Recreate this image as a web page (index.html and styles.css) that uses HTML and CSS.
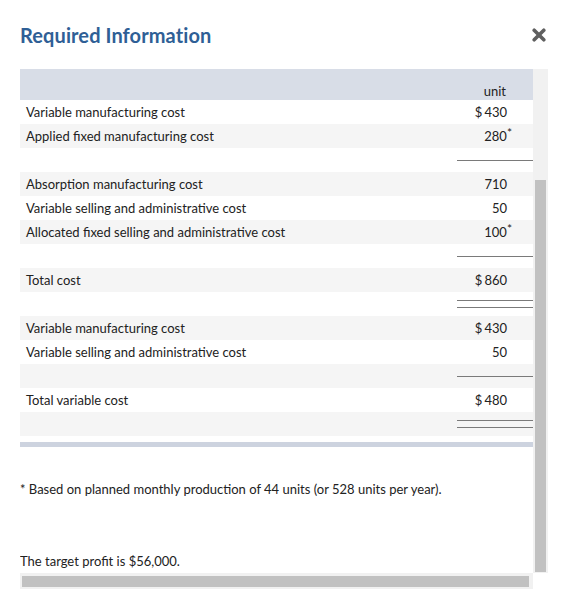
FILE: index.html
```html
<!DOCTYPE html>
<html lang="en">
<head>
<meta charset="utf-8">
<title>Required Information</title>
<link rel="stylesheet" href="styles.css">
</head>
<body>
<div class="modal">
  <div class="modal-head">
    <h1 class="title">Required Information</h1>
    <button class="close" type="button" aria-label="Close">
      <svg viewBox="0 0 14 14" width="14" height="14" aria-hidden="true">
        <path d="M2.2 2.2 L11.8 11.8 M11.8 2.2 L2.2 11.8" stroke="#5f5f5f" stroke-width="3.6" stroke-linecap="round" fill="none"/>
      </svg>
    </button>
  </div>
  <div class="scrollframe">
    <div class="viewport">
      <table class="cost">
        <thead>
          <tr><th class="label"></th><th class="num">unit</th></tr>
        </thead>
        <tbody>
          <tr><td class="label">Variable manufacturing cost</td><td class="num"><div class="amt"><span class="cur">$</span><span>430</span></div></td></tr>
          <tr><td class="label">Applied fixed manufacturing cost</td><td class="num"><div class="amt"><span></span><span>280<span class="fn">*</span></span></div></td></tr>
          <tr><td class="label"></td><td class="rulecell"><div class="rule"></div></td></tr>
          <tr><td class="label">Absorption manufacturing cost</td><td class="num"><div class="amt"><span></span><span>710</span></div></td></tr>
          <tr><td class="label">Variable selling and administrative cost</td><td class="num"><div class="amt"><span></span><span>50</span></div></td></tr>
          <tr><td class="label">Allocated fixed selling and administrative cost</td><td class="num"><div class="amt"><span></span><span>100<span class="fn">*</span></span></div></td></tr>
          <tr><td class="label"></td><td class="rulecell"><div class="rule"></div></td></tr>
          <tr><td class="label">Total cost</td><td class="num"><div class="amt"><span class="cur">$</span><span>860</span></div></td></tr>
          <tr><td class="label"></td><td class="rulecell"><div class="rule double"></div></td></tr>
          <tr><td class="label">Variable manufacturing cost</td><td class="num"><div class="amt"><span class="cur">$</span><span>430</span></div></td></tr>
          <tr><td class="label">Variable selling and administrative cost</td><td class="num"><div class="amt"><span></span><span>50</span></div></td></tr>
          <tr><td class="label"></td><td class="rulecell"><div class="rule"></div></td></tr>
          <tr><td class="label">Total variable cost</td><td class="num"><div class="amt"><span class="cur">$</span><span>480</span></div></td></tr>
          <tr><td class="label"></td><td class="rulecell"><div class="rule double"></div></td></tr>
        </tbody>
      </table>
      <p class="note">* Based on planned monthly production of 44 units (or 528 units per year).</p>
      <p class="target">The target profit is $56,000.</p>
    </div>
    <div class="vbar"><div class="vthumb"></div></div>
    <div class="hbar"><div class="hthumb"></div></div>
    <div class="corner"></div>
  </div>
</div>
</body>
</html>
```
FILE: styles.css
```css
html, body {
  margin: 0;
  padding: 0;
  background: #ffffff;
}
body {
  font-family: Lato, "Liberation Sans", Arial, sans-serif;
  color: #222222;
  font-size: 13px;
}
.modal {
  width: 562px;
}
.modal-head {
  height: 69px;
  display: flex;
  align-items: center;
  justify-content: space-between;
  padding: 0 16px 0 20px;
  box-sizing: border-box;
}
.title {
  margin: 0;
  font-size: 20px;
  line-height: 20px;
  letter-spacing: 0.1px;
  font-weight: 700;
  color: #2f5f96;
}
.close {
  border: 0;
  background: none;
  padding: 0;
  width: 14px;
  height: 14px;
  display: flex;
  cursor: pointer;
}
.scrollframe {
  margin-left: 20px;
  display: grid;
  grid-template-columns: 513px 15px;
  grid-template-rows: 504px 16px;
}
.viewport {
  overflow: hidden;
}
.vbar {
  background: #f1f1f1;
  padding: 111px 2px 1px;
  box-sizing: border-box;
  display: flex;
}
.vthumb {
  flex: 1;
  background: #c1c1c1;
}
.hbar {
  background: #f1f1f1;
  padding: 3px 4px 2px 2px;
  box-sizing: border-box;
  display: flex;
}
.hthumb {
  flex: 1;
  background: #c1c1c1;
}
.corner {
  background: #ffffff;
}
.cost {
  width: 513px;
  border-collapse: collapse;
  border-bottom: 5px solid #cdd3df;
}
.cost thead th {
  background: #d8dde7;
  height: 31px;
  padding: 8px 0 5px;
  box-sizing: border-box;
  font-weight: 400;
  line-height: 18px;
  vertical-align: bottom;
}
.cost thead th.num {
  text-align: right;
  padding-right: 27px;
}
.cost tbody::after {
  content: "";
  display: table-row;
  height: 8px;
}
.cost tbody tr:nth-child(even) {
  background: #f5f5f5;
}
.cost td {
  height: 24px;
  padding: 0;
  line-height: 18px;
  vertical-align: middle;
}
.cost td.label {
  padding-left: 6px;
}
.cost .num {
  width: 76px;
  box-sizing: border-box;
  padding: 0 26px 0 18px;
}
.cost .rulecell {
  width: 76px;
  padding: 0;
}
.amt {
  display: flex;
  justify-content: space-between;
}
.cur {
  margin-right: 2px;
}
.fn {
  font-size: 12px;
  line-height: 12px;
  vertical-align: top;
  margin-right: -5px;
}
.rule {
  height: 1px;
  background: #7a7a7a;
}
.rule.double {
  height: 6px;
  background: none;
  border-top: 1px solid #7a7a7a;
  border-bottom: 1px solid #7a7a7a;
}
.note {
  margin: 33px 0 0;
  line-height: 18px;
}
.target {
  margin: 54px 0 0;
  line-height: 18px;
}
```
